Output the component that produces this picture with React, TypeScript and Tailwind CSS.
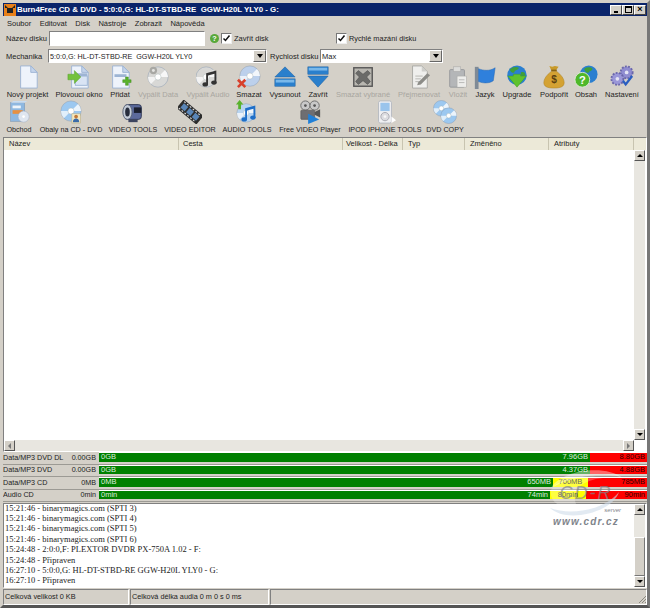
const ui = "font-['Liberation_Sans',sans-serif]";

const Disc = ({cx = 13, cy = 13, r = 11, fill = "#c8d8ee"}: {cx?: number; cy?: number; r?: number; fill?: string}) => (
	<g>
		<circle cx={cx} cy={cy} r={r} fill={fill} stroke="#8a9ab0" strokeWidth="0.5" />
		<path d={`M${cx} ${cy}L${cx + r * 0.7} ${cy - r * 0.7}A${r} ${r} 0 0 1 ${cx + r} ${cy}Z`} fill="#fff" opacity="0.8" />
		<path d={`M${cx} ${cy}L${cx - r * 0.7} ${cy + r * 0.7}A${r} ${r} 0 0 1 ${cx - r} ${cy}Z`} fill="#fff" opacity="0.7" />
		<circle cx={cx} cy={cy} r={r * 0.3} fill="#fff" stroke="#9aa" strokeWidth="0.4" />
	</g>
);

const Note = ({fill = "#333"}: {fill?: string}) => (
	<g fill={fill}>
		<path d="M11 9l11-3v13h-2V9.500l-7 2V21h-2z" />
		<ellipse cx="10" cy="21" rx="3" ry="2.300" />
		<ellipse cx="19.500" cy="19" rx="3" ry="2.300" />
	</g>
);

const Page = ({children}: {children?: React.ReactNode}) => (
	<g>
		<path d="M5 1h11l7 7v17H5z" fill="#eef3fb" stroke="#9db4d4" />
		<path d="M16 1v7h7z" fill="#c5d5ec" stroke="#9db4d4" />
		{children}
	</g>
);

const icons: Record<string, React.ReactNode> = {
	novy: <Page />,
	plovouci: (
		<Page>
			<rect x="9" y="9" width="13" height="3" fill="#9db4d4" />
			<rect x="9" y="12" width="13" height="10" fill="#d9e4f4" stroke="#9db4d4" />
			<path d="M1 10h7V6l7 7-7 7v-4H1z" fill="#74c23c" stroke="#4f9a22" strokeWidth="0.5" />
		</Page>
	),
	pridat: (
		<Page>
			<rect x="7" y="10" width="13" height="3" fill="#9db4d4" />
			<path d="M16 16h3v-3h3v3h3v3h-3v3h-3v-3h-3z" fill="#58b22c" stroke="#3d8a1c" strokeWidth="0.5" />
		</Page>
	),
	data: (
		<g>
			<Disc fill="#d8d8d6" />
			<circle cx="8" cy="6" r="4" fill="#a8a8a4" />
			<circle cx="8" cy="6" r="1.600" fill="#e4e4e2" />
		</g>
	),
	audio: (
		<g>
			<Disc fill="#d8d8d6" cx={11} />
			<Note />
		</g>
	),
	smazat: (
		<g>
			<Disc fill="#bcd0ec" cx={14} cy={12} />
			<path d="M2 15l3 3 3-3 2 2-3 3 3 3-2 2-3-3-3 3-2-2 3-3-3-3z" fill="#d8402c" />
		</g>
	),
	vysunout: (
		<g>
			<path d="M13 2l11 11H2z" fill="#2a7fcc" stroke="#1a5c9c" strokeWidth="0.5" />
			<rect x="2" y="15" width="22" height="8" fill="#2a7fcc" stroke="#1a5c9c" strokeWidth="0.5" />
			<rect x="3" y="16" width="20" height="3" fill="#79b8ea" />
		</g>
	),
	zavrit: (
		<g>
			<rect x="2" y="2" width="22" height="8" fill="#2a7fcc" stroke="#1a5c9c" strokeWidth="0.5" />
			<rect x="3" y="3" width="20" height="3" fill="#79b8ea" />
			<path d="M13 24L2 12h22z" fill="#2a7fcc" stroke="#1a5c9c" strokeWidth="0.5" />
		</g>
	),
	vybrane: (
		<g>
			<rect x="3" y="3" width="20" height="20" fill="#b8b6b0" stroke="#555" strokeWidth="1.500" />
			<path d="M8 6l5 4 5-4 3 3-4 4 4 5-3 3-5-4-5 4-3-3 4-5-4-4z" fill="#6a6a68" stroke="#444" strokeWidth="0.5" />
		</g>
	),
	prejmenovat: (
		<g>
			<path d="M6 1h10l6 6v18H6z" fill="#efefed" stroke="#a8a8a4" />
			<path d="M16 1v6h6z" fill="#cfcfcc" />
			<path d="M9 12h8M9 15h6M9 18h7" stroke="#b4b4b0" />
			<path d="M12 19l10-10 3 2-10 10-4 1z" fill="#8c8c88" />
		</g>
	),
	vlozit: (
		<g>
			<rect x="4" y="5" width="16" height="19" rx="1" fill="#b4b6b8" stroke="#96989a" />
			<rect x="8" y="2" width="8" height="5" fill="#dcdcda" stroke="#a0a0a0" strokeWidth="0.5" />
			<rect x="12" y="12" width="10" height="12" fill="#ededeb" stroke="#a4a4a2" strokeWidth="0.5" />
			<path d="M14 16h6M14 19h6" stroke="#b8b8b6" />
		</g>
	),
	jazyk: (
		<g>
			<rect x="2" y="2" width="4" height="24" fill="#7f8a96" />
			<path d="M6 4c5 2 12 3 18-1l-2 14c-4 3-11 3-16 1z" fill="#2f80dc" stroke="#1e62b0" strokeWidth="0.5" />
		</g>
	),
	upgrade: (
		<g>
			<circle cx="13" cy="11" r="10.500" fill="#2b7fd0" />
			<path d="M5 5c4-4 8-3 10-2-1 3-4 2-5 5-2 1-4 0-5-3zM17 8c3-1 5 0 5 3l-4 2z" fill="#3f9f3a" />
			<path d="M3 12h6v-2h8v2h6L13 24z" fill="#5fc22e" stroke="#3f9a1c" strokeWidth="0.5" />
		</g>
	),
	podporit: (
		<g>
			<path d="M8 1l3 1 3-1 4 1-3 4h-5z" fill="#c89a2a" />
			<rect x="10" y="5" width="6" height="2" fill="#8a6414" />
			<path d="M10 7h6c5 4 8 8 8 12 0 4-3 6-11 6S2 23 2 19c0-4 3-8 8-12z" fill="#d4a233" stroke="#a87c18" strokeWidth="0.5" />
			<text x="13" y="20" textAnchor="middle" fontSize="11" fontWeight="bold" fill="#5a4010" fontFamily="Liberation Sans">$</text>
		</g>
	),
	obsah: (
		<g>
			<circle cx="16" cy="10" r="9.500" fill="#2b7fd0" />
			<path d="M11 4c3-2 7-2 9 0-1 3-3 2-4 4-2 1-4 0-5-4z" fill="#3f9f3a" />
			<circle cx="9" cy="16" r="8" fill="#4fb82a" stroke="#dfe8d8" />
			<text x="9" y="20.500" textAnchor="middle" fontSize="12" fontWeight="bold" fill="#fff" fontFamily="Liberation Sans">?</text>
		</g>
	),
	nastaveni: (
		<g>
			<circle cx="18" cy="8" r="6.500" fill="#8f8cd0" stroke="#6a66aa" strokeWidth="2" strokeDasharray="2 1.500" />
			<circle cx="18" cy="8" r="2" fill="#e4e4f4" />
			<circle cx="8" cy="15" r="6.500" fill="#9a97d8" stroke="#6a66aa" strokeWidth="2" strokeDasharray="2 1.500" />
			<circle cx="8" cy="15" r="2" fill="#e4e4f4" />
			<path d="M14 17l3 4 7-9" fill="none" stroke="#2a5ec0" strokeWidth="2.500" />
		</g>
	),
	obchod: (
		<g>
			<rect x="4" y="3" width="15" height="20" fill="#8fb8e0" stroke="#6a8ab0" strokeWidth="0.5" />
			<path d="M4 3l3-2h15l-3 2z" fill="#c8ddf2" />
			<rect x="6" y="6" width="9" height="3" fill="#eef4fa" />
			<rect x="6" y="11" width="11" height="4" fill="#e89040" />
			<circle cx="18" cy="18" r="6" fill="#dfe6f0" stroke="#98a8c0" strokeWidth="0.5" />
			<circle cx="18" cy="18" r="1.500" fill="#fff" />
		</g>
	),
	obaly: (
		<g>
			<Disc cx={13} cy={12} r={11} fill="#9cc8f0" />
			<rect x="14" y="15" width="9" height="10" fill="#f4e8c0" stroke="#b8a878" strokeWidth="0.5" />
			<circle cx="18.500" cy="18" r="2" fill="#c07838" />
			<path d="M15 24c0-3 2-4 3.500-4s3.500 1 3.500 4z" fill="#3a6aa8" />
		</g>
	),
	videotools: (
		<g>
			<rect x="4" y="5" width="18" height="16" rx="3" fill="#5c6a9c" stroke="#2c3450" />
			<ellipse cx="7" cy="13" rx="5" ry="8" fill="#c4ccd8" stroke="#5a6478" />
			<ellipse cx="7" cy="13" rx="2.500" ry="5" fill="#262c3c" />
			<rect x="14" y="8" width="8" height="6" fill="#1c2030" />
			<rect x="8" y="21" width="10" height="3" fill="#3c4460" />
		</g>
	),
	videoeditor: (
		<g transform="rotate(40 13 13)">
			<rect x="-1" y="7" width="28" height="12" fill="#2c2c2c" />
			<path d="M1 8.500h2M5 8.500h2M9 8.500h2M13 8.500h2M17 8.500h2M21 8.500h2M1 17.500h2M5 17.500h2M9 17.500h2M13 17.500h2M17 17.500h2M21 17.500h2" stroke="#ddd" strokeWidth="1.200" />
			<rect x="2" y="10" width="6" height="6" fill="#5a86b8" />
			<rect x="10" y="10" width="6" height="6" fill="#5a86b8" />
			<rect x="18" y="10" width="6" height="6" fill="#5a86b8" />
		</g>
	),
	audiotools: (
		<g>
			<Disc cx={12} cy={14} r={10} fill="#b8d4f0" />
			<Note fill="#1f6fc8" />
			<path d="M5 0l4 5H6.500v5h-3V5H1z" fill="#58b22c" />
		</g>
	),
	player: (
		<g>
			<circle cx="8" cy="6" r="5" fill="#c8c8c8" stroke="#6a6a6a" />
			<circle cx="18" cy="6" r="5" fill="#c8c8c8" stroke="#6a6a6a" />
			<circle cx="8" cy="6" r="1.500" fill="#555" />
			<circle cx="18" cy="6" r="1.500" fill="#555" />
			<rect x="3" y="11" width="15" height="10" rx="1" fill="#6e6e72" stroke="#444" strokeWidth="0.5" />
			<path d="M18 13l6-3v9l-6-3z" fill="#555" />
			<path d="M11 15l12 6-12 5z" fill="#2180d8" />
		</g>
	),
	ipod: (
		<g>
			<rect x="6" y="1" width="14" height="24" rx="2" fill="#f0f0f2" stroke="#b4b8c0" />
			<rect x="8" y="3" width="10" height="9" fill="#9ac4ec" />
			<circle cx="13" cy="18" r="4.500" fill="#dcdce0" stroke="#a8a8b0" />
			<circle cx="13" cy="18" r="1.500" fill="#f8f8f8" />
			<path d="M20 18l5 4-5 3z" fill="#fff" />
		</g>
	),
	dvdcopy: (
		<g>
			<Disc cx={9} cy={9} r={8.500} fill="#9cc8f0" />
			<Disc cx={17} cy={17} r={8.500} fill="#9cc8f0" />
		</g>
	),
};

const row1 = [
	{k: "novy", t: "Nový projekt", w: "w-[49px]"},
	{k: "plovouci", t: "Plovoucí okno", w: "w-[54px]"},
	{k: "pridat", t: "Přidat", w: "w-[28px]"},
	{k: "data", t: "Vypálit Data", w: "w-[48px]", off: true},
	{k: "audio", t: "Vypálit Audio", w: "w-[52px]", off: true},
	{k: "smazat", t: "Smazat", w: "w-[30px]"},
	{k: "vysunout", t: "Vysunout", w: "w-[42px]"},
	{k: "zavrit", t: "Zavřít", w: "w-[24px]"},
	{k: "vybrane", t: "Smazat vybrané", w: "w-[66px]", off: true},
	{k: "prejmenovat", t: "Přejmenovat", w: "w-[46px]", off: true},
	{k: "vlozit", t: "Vložit", w: "w-[32px]", off: true},
	{k: "jazyk", t: "Jazyk", w: "w-[22px]"},
	{k: "upgrade", t: "Upgrade", w: "w-[42px]"},
	{k: "podporit", t: "Podpořit", w: "w-[32px]"},
	{k: "obsah", t: "Obsah", w: "w-[32px]"},
	{k: "nastaveni", t: "Nastavení", w: "w-[40px]"},
];

const row2 = [
	{k: "obchod", t: "Obchod", w: "w-[32px]"},
	{k: "obaly", t: "Obaly na CD - DVD", w: "w-[72px]"},
	{k: "videotools", t: "VIDEO TOOLS", w: "w-[52px]"},
	{k: "videoeditor", t: "VIDEO EDITOR", w: "w-[62px]"},
	{k: "audiotools", t: "AUDIO TOOLS", w: "w-[52px]"},
	{k: "player", t: "Free VIDEO Player", w: "w-[74px]"},
	{k: "ipod", t: "IPOD IPHONE TOOLS", w: "w-[76px]"},
	{k: "dvdcopy", t: "DVD COPY", w: "w-[44px]"},
];

const ToolButton = ({k, t, w, off, size}: {k: string; t: string; w: string; off?: boolean; size: string}) => (
	<div className={`${w} flex h-[35px] shrink-0 flex-col items-center`}>
		<svg viewBox="0 0 26 26" className="h-[24px] w-[24px] shrink-0">
			{icons[k]}
		</svg>
		<span className={`${size} whitespace-nowrap leading-[11px] ${off ? "text-[#a8a6a0]" : "text-[#222]"}`}>{t}</span>
	</div>
);

const ComboArrow = () => (
	<div className="flex h-[12px] w-[13px] items-center justify-center border border-[#666] border-l-white border-t-white bg-[#d4d0c8]">
		<div className="h-0 w-0 border-x-[3px] border-t-[4px] border-x-transparent border-t-black" />
	</div>
);

const Check = () => (
	<div className="flex h-[11px] w-[11px] items-center justify-center border border-[#777] border-b-[#eee] border-r-[#eee] bg-white">
		<svg viewBox="0 0 9 9" className="h-[9px] w-[9px]">
			<path d="M1.500 4.500l2 2 4-5" fill="none" stroke="#111" strokeWidth="1.500" />
		</svg>
	</div>
);

const columns = [
	{t: "Název", w: "w-[175px] pl-[5px]"},
	{t: "Cesta", w: "w-[164px] pl-[4px]"},
	{t: "Velikost - Délka", w: "w-[60px] pl-[3px]"},
	{t: "Typ", w: "w-[62px] pl-[5px]"},
	{t: "Změněno", w: "w-[84px] pl-[5px]"},
	{t: "Atributy", w: "w-[85px] pl-[5px]"},
];

const bars = [
	{name: "Data/MP3 DVD DL", val: "0.00GB", low: "0GB", g: "7.96GB", r: "8.80GB", gw: "w-[491px]"},
	{name: "Data/MP3 DVD", val: "0.00GB", low: "0GB", g: "4.37GB", r: "4.88GB", gw: "w-[491px]"},
	{name: "Data/MP3 CD", val: "0MB", low: "0MB", g: "650MB", y: "700MB", r: "785MB", gw: "w-[454px]", yw: "w-[35px]"},
	{name: "Audio CD", val: "0min", low: "0min", g: "74min", y: "80min", r: "90min", gw: "w-[451px]", yw: "w-[36px]"},
];

const log = [
	"15:21:46 - binarymagics.com (SPTI 3)",
	"15:21:46 - binarymagics.com (SPTI 4)",
	"15:21:46 - binarymagics.com (SPTI 5)",
	"15:21:46 - binarymagics.com (SPTI 6)",
	"15:24:48 - 2:0:0,F: PLEXTOR DVDR PX-750A 1.02 - F:",
	"15:24:48 - Připraven",
	"16:27:10 - 5:0:0,G: HL-DT-STBD-RE GGW-H20L YLY0 - G:",
	"16:27:10 - Připraven",
];

const sunken = "border border-[#808080] border-b-white border-r-white";

const ScrollBtn = ({dir}: {dir: "up" | "down" | "left" | "right"}) => (
	<div className="flex h-[11px] w-[11px] shrink-0 items-center justify-center border border-[#555] border-l-white border-t-white bg-[#d4d0c8]">
		{dir === "up" && <div className="h-0 w-0 border-x-[3px] border-b-[3px] border-x-transparent border-b-black" />}
		{dir === "down" && <div className="h-0 w-0 border-x-[3px] border-t-[3px] border-x-transparent border-t-black" />}
		{dir === "left" && <div className="h-0 w-0 border-y-[3px] border-r-[3px] border-y-transparent border-r-[#777]" />}
		{dir === "right" && <div className="h-0 w-0 border-y-[3px] border-l-[3px] border-y-transparent border-l-[#777]" />}
	</div>
);

const App = () => {
	return (
		<div className={`${ui} relative flex h-[608px] w-[650px] flex-col overflow-hidden border-[3px] border-[#d4d0c8] border-b-[#555] border-r-[#777] bg-[#d4d0c8] text-[#222]`}>
			<div className="flex h-[13px] shrink-0 items-center bg-[#0a246a] px-[1px]">
				<svg viewBox="0 0 12 12" className="h-[12px] w-[12px] shrink-0">
					<rect width="12" height="12" fill="#e8801a" />
					<rect x="3" y="4" width="6" height="5" fill="#222" />
					<path d="M1 1l3 3H1zM11 1L8 4h3z" fill="#222" />
				</svg>
				<span className="ml-[1px] whitespace-nowrap text-[7.900px] font-bold leading-[12px] text-white">
					Burn4Free CD &amp; DVD - 5:0:0,G: HL-DT-STBD-RE&nbsp; GGW-H20L YLY0 - G:
				</span>
				<div className="ml-auto flex">
					{["min", "max", "close"].map((b) => (
						<div key={b} className="flex h-[10px] w-[12px] items-center justify-center border border-[#444] border-l-white border-t-white bg-[#d4d0c8]">
							{b === "min" && <div className="mt-[4px] h-[2px] w-[4px] bg-black" />}
							{b === "max" && <div className="h-[7px] w-[7px] border border-t-2 border-black" />}
							{b === "close" && <span className="text-[9px] font-bold leading-[9px] text-black">×</span>}
						</div>
					))}
				</div>
			</div>

			<div className="flex h-[14px] shrink-0 items-center gap-[8.500px] pl-[4px] text-[7.500px] leading-[11px]">
				{["Soubor", "Editovat", "Disk", "Nástroje", "Zobrazit", "Nápověda"].map((m) => (
					<span key={m}>{m}</span>
				))}
			</div>

			<div className="flex h-[16px] shrink-0 items-center text-[7.500px] leading-[11px]">
				<span className="w-[46px] shrink-0 whitespace-nowrap pl-[3px]">Název disku</span>
				<div className={`${sunken} h-[15px] w-[156px] shrink-0 bg-white`} />
				<svg viewBox="0 0 10 10" className="ml-[5px] h-[9px] w-[9px] shrink-0">
					<circle cx="5" cy="5" r="5" fill="#58a83a" />
					<text x="5" y="8" textAnchor="middle" fontSize="8" fontWeight="bold" fill="#fff">?</text>
				</svg>
				<div className="ml-[2px]"><Check /></div>
				<span className="ml-[2px] w-[34px] shrink-0 whitespace-nowrap">Zavřít disk</span>
				<div className="ml-[68px]"><Check /></div>
				<span className="ml-[2px] whitespace-nowrap text-[7.300px]">Rychlé mazání disku</span>
			</div>

			<div className="mt-[3px] flex h-[14px] shrink-0 items-center text-[7.500px] leading-[11px]">
				<span className="w-[45px] shrink-0 pl-[3px]">Mechanika</span>
				<div className={`${sunken} flex h-[14px] w-[219px] shrink-0 items-center justify-between bg-white pl-[1px]`}>
					<span className="whitespace-nowrap text-[7.200px]">5:0:0,G: HL-DT-STBD-RE&nbsp; GGW-H20L YLY0</span>
					<ComboArrow />
				</div>
				<span className="ml-[3px] w-[50px] shrink-0 whitespace-nowrap">Rychlost disku</span>
				<div className={`${sunken} flex h-[14px] w-[123px] shrink-0 items-center justify-between bg-white pl-[1px]`}>
					<span>Max</span>
					<ComboArrow />
				</div>
			</div>

			<div className="mt-[2px] flex shrink-0">
				{row1.map((b) => <ToolButton key={b.k} {...b} size="text-[7.500px]" />)}
			</div>
			<div className="flex shrink-0">
				{row2.map((b) => <ToolButton key={b.k} {...b} size="text-[7.200px]" />)}
			</div>

			<div className="mt-[2px] flex h-[315px] w-full shrink-0 flex-col border border-[#808080] border-b-white border-r-white bg-white">
				<div className="flex h-[12px] shrink-0 bg-[#ece9d8] text-[7.500px] leading-[12px]">
					{columns.map((c) => (
						<div key={c.t} className={`${c.w} shrink-0 whitespace-nowrap border-r border-[#c8c4b0]`}>{c.t}</div>
					))}
				</div>
				<div className="flex grow">
					<div className="grow" />
					<div className="mr-[1px] flex w-[11px] shrink-0 flex-col justify-between bg-[#e8e6e0]">
						<ScrollBtn dir="up" />
						<ScrollBtn dir="down" />
					</div>
				</div>
				<div className="flex h-[11px] shrink-0 pr-[12px]">
					<div className="flex grow justify-between bg-[#e8e6e0]">
						<ScrollBtn dir="left" />
						<ScrollBtn dir="right" />
					</div>
				</div>
			</div>

			<div className="flex shrink-0 flex-col">
				{bars.map((b) => (
					<div key={b.name} className="flex h-[12.500px] items-stretch text-[7.200px] leading-[10px]">
						<div className="flex w-[96px] shrink-0 items-end justify-between border-b border-[#9c9a94] pb-[1px] pr-[3px] text-[#222]">
							<span className="whitespace-nowrap">{b.name}</span>
							<span>{b.val}</span>
						</div>
						<div className="flex grow flex-col text-[7.500px]">
							<div className="h-[1px] shrink-0 bg-white" />
							<div className="flex h-[8.500px] shrink-0 items-center">
								<div className={`${b.gw} flex h-full shrink-0 items-center justify-between bg-[#008000] px-[2px] text-[#dfeadf]`}>
									<span>{b.low}</span>
									<span>{b.g}</span>
								</div>
								{b.y && <div className={`${b.yw} flex h-full shrink-0 items-center justify-center bg-[#ffff00] text-[#333]`}>{b.y}</div>}
								<div className="flex h-full grow items-center justify-end bg-[#ff0000] pr-[2px] text-[#300000]">{b.r}</div>
							</div>
							<div className="grow border-b border-[#9c9a94]" />
						</div>
					</div>
				))}
			</div>

			<div className="mt-[1px] flex h-[85px] w-full shrink-0 border border-[#808080] border-b-white border-r-white bg-white">
				<div className="grow overflow-hidden pl-[1px] font-['Liberation_Serif',serif] text-[8.500px] leading-[10.400px] text-[#222]">
					<div className="-mt-[1.500px]">
						{log.map((l) => (
							<div key={l} className="whitespace-nowrap">{l}</div>
						))}
					</div>
				</div>
				<div className="mr-[1px] flex w-[11px] shrink-0 flex-col bg-[#e8e6e0]">
					<ScrollBtn dir="up" />
					<div className="mt-[22px] grow border border-[#777] border-l-white border-t-white bg-[#d4d0c8]" />
					<ScrollBtn dir="down" />
				</div>
			</div>

			<div className="mt-[1px] flex h-[16px] shrink-0 gap-[1px] text-[7.300px] leading-[14px]">
				<div className={`${sunken} w-[126px] shrink-0 pl-[1px]`}>Celková velikost 0 KB</div>
				<div className={`${sunken} w-[139px] shrink-0 pl-[1px]`}>Celková délka audia 0 m 0 s 0 ms</div>
				<div className={`${sunken} grow`} />
			</div>

			{/* cdr.cz watermark over the bars and the log */}
			<div className="absolute left-[544px] top-[463px] flex w-[78px] flex-col items-center text-[#7f858c]">
				<svg viewBox="0 0 78 56" className="absolute left-0 top-0 h-[56px] w-[78px]">
					<path d="M4 22C14 4 58 -2 76 12C62 6 30 8 4 22Z" fill="#fff" opacity="0.4" />
					<path d="M4 24C10 12 40 8 56 12C36 14 22 24 30 40C14 44 2 36 4 24Z" fill="#fff" opacity="0.25" />
					<path d="M3 42C24 50 58 44 72 26C66 46 20 58 3 42Z" fill="#cfdcea" opacity="0.6" />
				</svg>
				<span className="relative mt-[18px] whitespace-nowrap text-[18px] italic leading-[18px] tracking-[2px] opacity-70">CD-R</span>
				<span className="relative mt-[5px] self-end pr-[4px] text-[6px] italic leading-[7px]">server</span>
				<span className="relative mt-[2px] whitespace-nowrap text-[10px] font-bold italic leading-[11px] tracking-[1.200px]">www.cdr.cz</span>
			</div>

			<svg viewBox="0 0 9 9" className="absolute bottom-[1px] right-0 h-[9px] w-[9px]">
				<path d="M8 1L1 8M8 4L4 8M8 7L7 8" stroke="#8a8880" />
			</svg>
		</div>
	);
};

export default App;
